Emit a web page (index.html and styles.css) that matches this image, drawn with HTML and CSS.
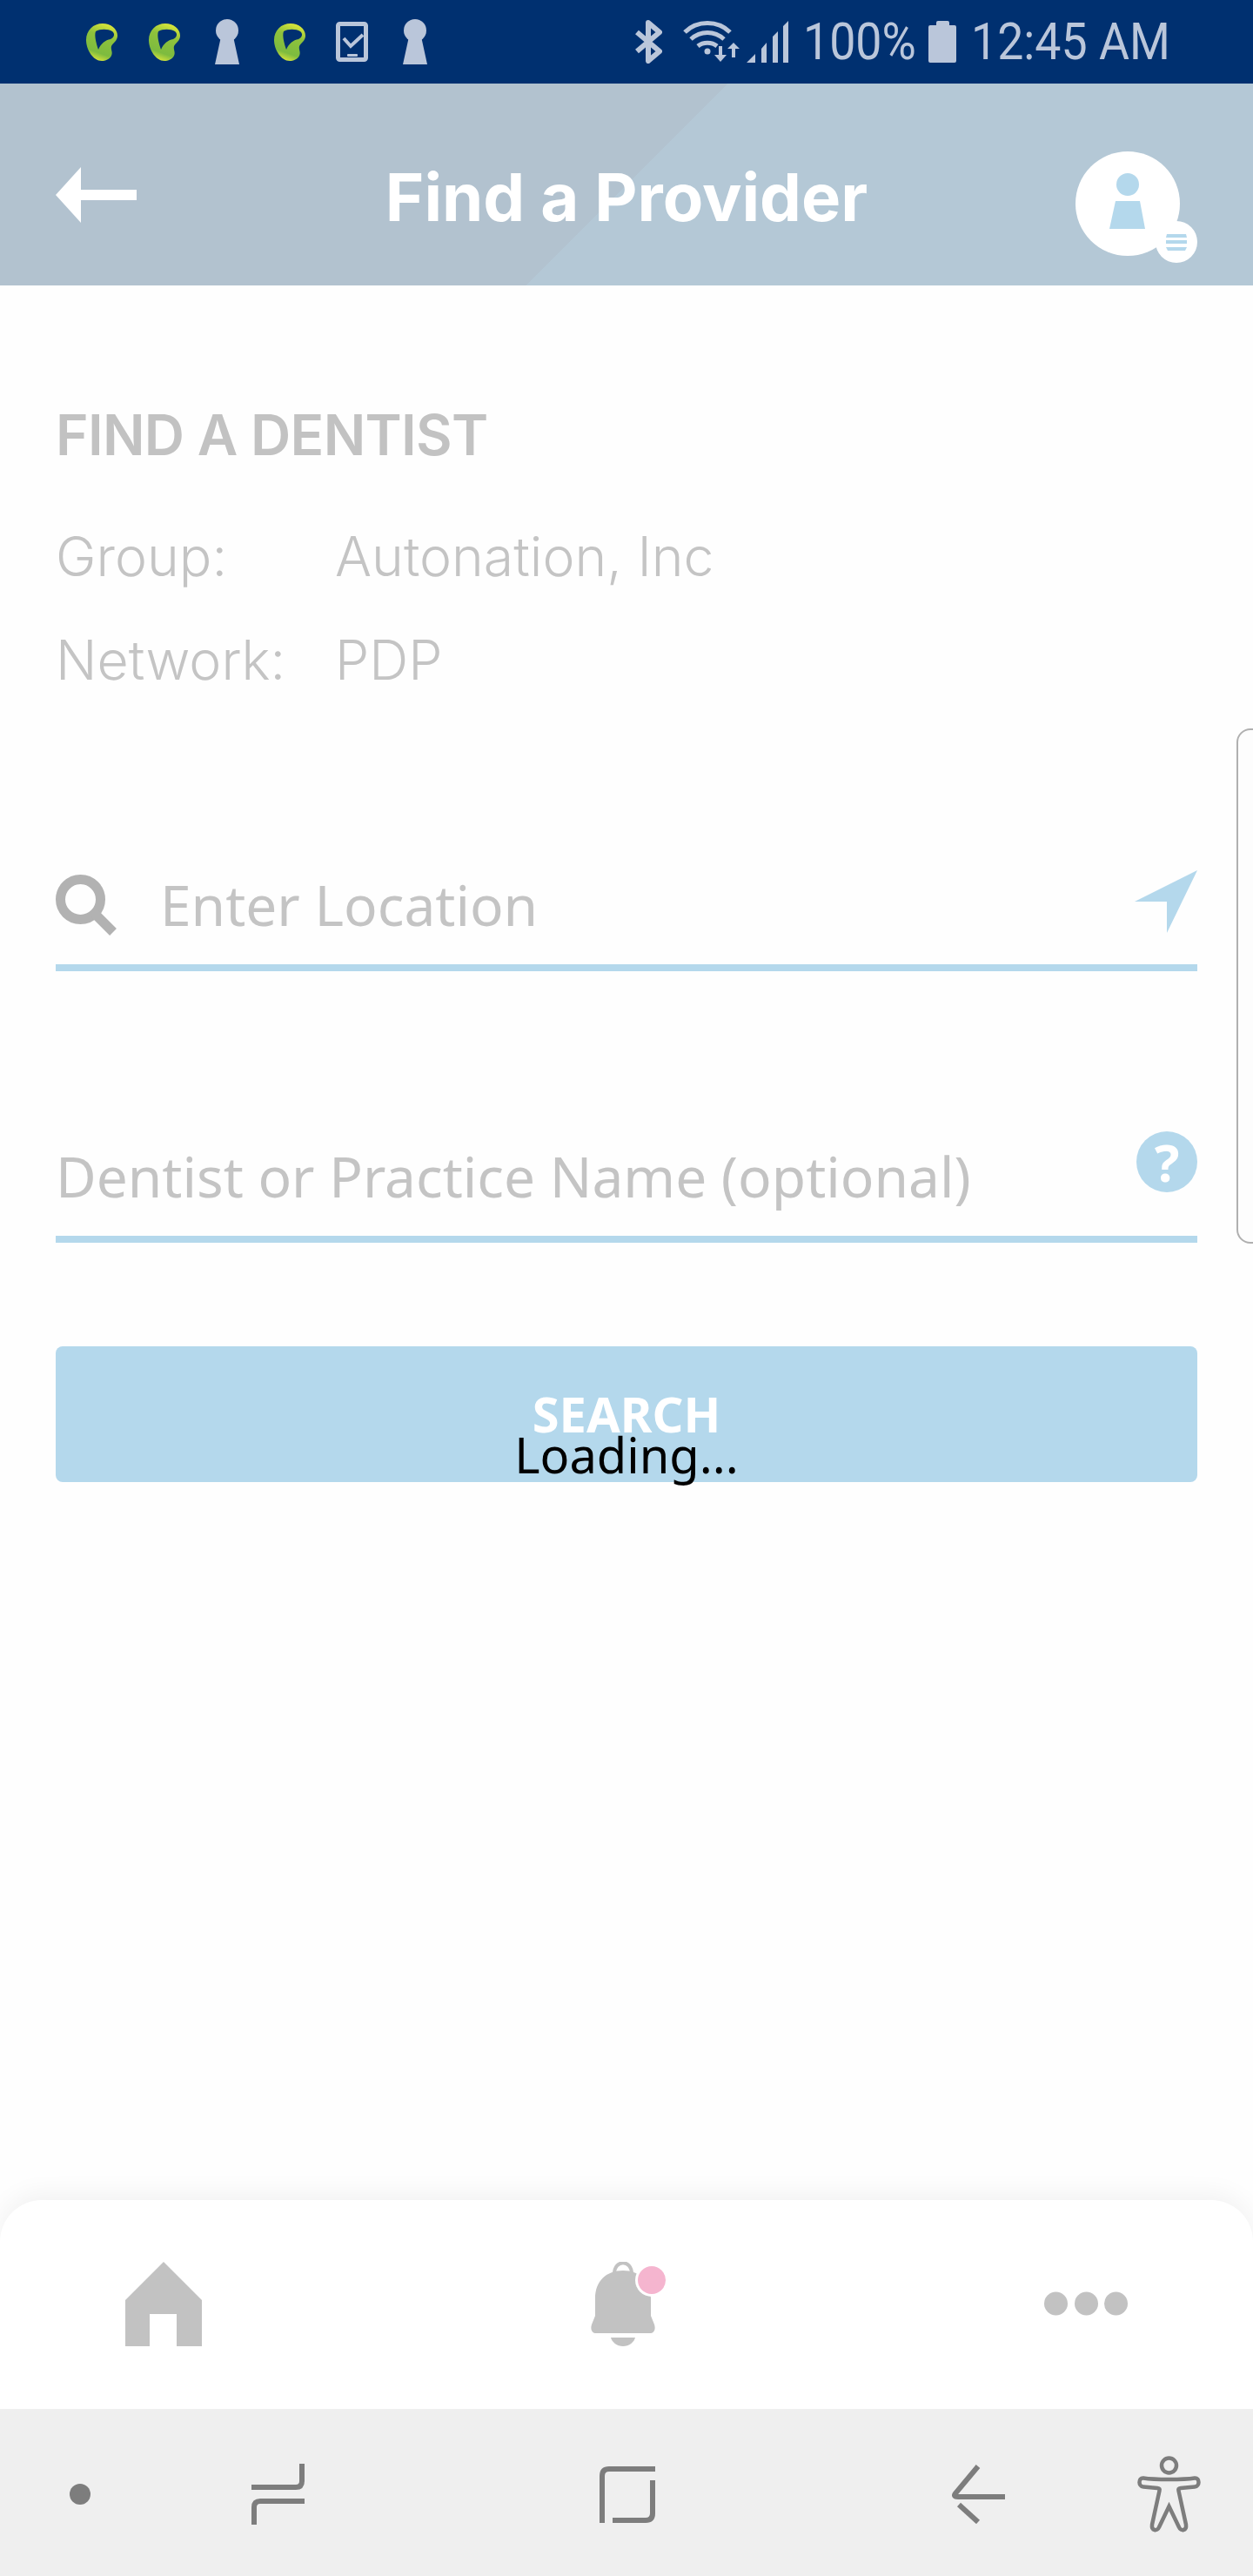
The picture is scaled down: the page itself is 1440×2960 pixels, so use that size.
FILE: index.html
```html
<!DOCTYPE html>
<html lang="en">
<head>
  <meta charset="UTF-8">
  <title>Find a Provider</title>
  <meta name="viewport" content="width=device-width, initial-scale=1">
  <link rel="stylesheet" href="styles.css">
</head>
<body>

  <svg class="defs" width="0" height="0">
    <defs>
      <linearGradient id="leafFill" x1="0.7" y1="0" x2="0.4" y2="1">
        <stop offset="0" stop-color="#dfe83a"/>
        <stop offset="0.35" stop-color="#8fc23c"/>
        <stop offset="0.8" stop-color="#7dbb3f"/>
        <stop offset="1" stop-color="#d3e23c"/>
      </linearGradient>
      <symbol id="leaf" viewBox="0 0 36 43">
        <path fill="url(#leafFill)" fill-rule="evenodd" d="M19,0 C28,0 36,6 36,14 C36,20 31,22 29,26 C28,30 31,33 29,37 C27,41 22,43 18,43 C8,43 0,30 0,19 C0,8 8,0 19,0 Z M11,9 C16,6 25,6 30,9 C33,11 33,16 28,18 C22,19 17,23 14,30 C12,24 9,14 11,9 Z"/>
      </symbol>
      <symbol id="keyhole" viewBox="0 0 28 52">
        <circle cx="14" cy="13" r="13" fill="#bac6da"/>
        <path fill="#bac6da" d="M7,20 L21,20 L28,52 L0,52 Z"/>
      </symbol>
    </defs>
  </svg>

  <div class="status-bar">
    <svg class="leaf"><use href="#leaf"/></svg>
    <svg class="leaf"><use href="#leaf"/></svg>
    <svg class="keyhole"><use href="#keyhole"/></svg>
    <svg class="leaf"><use href="#leaf"/></svg>
    <svg class="phone-check" viewBox="0 0 37 46">
      <rect x="2.500" y="2.500" width="32" height="41" rx="2" fill="none" stroke="#bac6da" stroke-width="5"/>
      <path d="M9,19 L17,28 L31,15" fill="none" stroke="#bac6da" stroke-width="4"/>
      <rect x="13" y="37" width="12" height="3" rx="1" fill="#bac6da"/>
    </svg>
    <svg class="keyhole"><use href="#keyhole"/></svg>

    <svg class="bluetooth" viewBox="0 0 32 50">
      <path d="M3,14 L29,36 L16,47 L16,3 L29,14 L3,36" fill="none" stroke="#bac6da" stroke-width="6" stroke-linejoin="round"/>
    </svg>
    <svg class="wifi" viewBox="0 0 65 48">
      <g fill="none" stroke="#bac6da" stroke-width="5">
        <path d="M2,13 C16,-1 40,-1 54,13"/>
        <path d="M9,21 C20,11 36,11 47,21"/>
        <path d="M17,29 C23,24 33,24 39,29"/>
      </g>
      <circle cx="28" cy="35" r="3.500" fill="#bac6da"/>
      <path fill="#bac6da" d="M41,29 H45 V39 H50 L43,47 L36,39 H41 Z M56,42 H60 V32 H65 L58,25 L51,32 H56 Z"/>
    </svg>
    <svg class="signal" viewBox="0 0 48 48">
      <path fill="#bac6da" d="M0,48 L10,38 V48 Z M17,32 L23,25 V48 H17 Z M30,18 L36,12 V48 H30 Z M42,6 L48,0 V48 H42 Z"/>
    </svg>
    <span class="status-text percent">100%</span>
    <svg class="battery" viewBox="0 0 32 48">
      <path fill="#bac6da" d="M9,2 Q9,0 11,0 H22 Q24,0 24,2 V5 H30 Q32,5 32,7 V46 Q32,48 30,48 H2 Q0,48 0,46 V7 Q0,5 2,5 H9 Z"/>
    </svg>
    <span class="status-text clock">12:45 AM</span>
  </div>

  <header class="top-bar">
    <svg class="back-arrow" viewBox="0 0 93 64">
      <path fill="#fff" d="M0,32 L29,0 V26 H93 V38 H29 V64 Z"/>
    </svg>
    <h1>Find a Provider</h1>
    <svg class="avatar" viewBox="0 0 140 128">
      <circle cx="60" cy="60" r="60" fill="#fff"/>
      <ellipse cx="60" cy="38" rx="13" ry="13" fill="#b4d8ec"/>
      <path fill="#b4d8ec" d="M46,57 H74 L80,89 H39 Z"/>
      <circle cx="116" cy="104" r="24" fill="#fff"/>
      <path fill="#b4d8ec" d="M105,95 H127 L128,99 H104 Z M104,102 H128 V106 H104 Z M104,110 H128 L126,114 H106 Z"/>
    </svg>
  </header>

  <main class="content">
    <h2>FIND A DENTIST</h2>
    <div class="plan-info">
      <span>Group:</span><span>Autonation, Inc</span>
      <span>Network:</span><span>PDP</span>
    </div>

    <div class="field field-location">
      <svg class="search-icon" viewBox="0 0 71 71">
        <circle cx="28.500" cy="28.500" r="23" fill="none" stroke="#b2b2b2" stroke-width="11"/>
        <path d="M45,45 L66,66" stroke="#b2b2b2" stroke-width="11"/>
      </svg>
      <span class="placeholder">Enter Location</span>
      <svg class="locate-icon" viewBox="0 0 72 72">
        <path fill="#b4d8ec" d="M72,0 L37,72 V36 H0 Z"/>
      </svg>
    </div>

    <div class="field field-name">
      <span class="placeholder">Dentist or Practice Name (optional)</span>
      <span class="help-icon">?</span>
    </div>

    <button class="search-btn">SEARCH</button>
    <div class="loading">Loading...</div>

    <div class="side-handle"></div>
  </main>

  <nav class="tab-bar">
    <svg class="tab-home" viewBox="0 0 88 97">
      <path fill="#c2c2c2" d="M44,0 L88,44 V97 H59 V60 H28 V97 H0 V44 Z"/>
    </svg>
    <svg class="tab-bell" viewBox="0 0 86 97">
      <path fill="none" stroke="#c2c2c2" stroke-width="4" d="M27,14 C27,-3 47,-3 47,14"/>
      <path fill="#c2c2c2" d="M37,10 C18,10 5,22 5,42 V62 L1,72 C-1,78 2,82 6,82 H68 C72,82 75,78 73,72 L69,62 V42 C69,22 56,10 37,10 Z"/>
      <path fill="#c2c2c2" d="M23,87 H51 C50,92 44,97 37,97 C30,97 24,92 23,87 Z"/>
      <circle cx="70" cy="21" r="19" fill="#fff"/>
      <circle cx="70" cy="21" r="16" fill="#f5b5cf"/>
    </svg>
    <svg class="tab-more" viewBox="0 0 96 97">
      <circle cx="13.500" cy="48" r="13.500" fill="#c2c2c2"/>
      <circle cx="48.500" cy="48" r="13.500" fill="#c2c2c2"/>
      <circle cx="82.500" cy="48" r="13.500" fill="#c2c2c2"/>
    </svg>
  </nav>

  <div class="system-nav">
    <svg class="sys-dot" viewBox="0 0 24 24"><circle cx="12" cy="12" r="12" fill="#7d7d7d"/></svg>
    <svg class="sys-recents" viewBox="0 0 61 70">
      <g fill="none" stroke="#7d7d7d" stroke-width="6">
        <path d="M58,0 V20 Q58,27 51,27 H0"/>
        <path d="M61,43 H10 Q3,43 3,50 V70"/>
      </g>
    </svg>
    <svg class="sys-home" viewBox="0 0 64 65">
      <g fill="none" stroke="#7d7d7d" stroke-width="6">
        <path d="M3,65 V11 Q3,3 11,3 H64"/>
        <path d="M15,62 H53 Q61,62 61,54 V16"/>
      </g>
    </svg>
    <svg class="sys-back" viewBox="0 0 61 68">
      <g fill="none" stroke="#7d7d7d" stroke-width="6">
        <path d="M30,2 L4,33 Q1,37 7,37 H61"/>
        <path d="M8,46 L30,66"/>
      </g>
    </svg>
    <svg class="sys-access" viewBox="0 0 73 88">
      <g fill="none" stroke="#7d7d7d" stroke-width="4.500">
        <circle cx="36.500" cy="11" r="8.500"/>
        <path d="M7,25.500 C20,27.500 53,27.500 66,25.500 C72,25 72,35 66,35.500 L50,37 C47,37.500 47,38 47.500,40 L56,79 C57,86 50,87 48,82 L36.500,58 L25,82 C23,87 16,86 17,79 L25.500,40 C26,38 26,37.500 23,37 L7,35.500 C1,35 1,25 7,25.500 Z"/>
      </g>
    </svg>
  </div>

</body>
</html>
```

FILE: styles.css
```css
* {
  box-sizing: border-box;
}

html, body {
  margin: 0;
  padding: 0;
}

body {
  position: relative;
  width: 1440px;
  height: 2960px;
  display: flex;
  flex-direction: column;
  background-color: #fefefe;
  font-family: 'Noto Sans', sans-serif;
  overflow: hidden;
}

svg {
  display: block;
  flex: none;
}

.defs {
  position: absolute;
}

/* status bar */
.status-bar {
  height: 96px;
  flex: none;
  display: flex;
  align-items: center;
  gap: 36px;
  padding-left: 99px;
  background-color: #003070;
}

.leaf {
  width: 36px;
  height: 43px;
  margin-top: 1px;
}

.keyhole {
  width: 28px;
  height: 52px;
  margin: 0 4px;
}

.phone-check {
  width: 37px;
  height: 46px;
  margin-left: -1px;
}

.bluetooth {
  width: 32px;
  height: 50px;
  margin-left: 198px;
}

.wifi {
  width: 65px;
  height: 48px;
  margin-left: -12px;
}

.signal {
  width: 48px;
  height: 48px;
  margin-left: -28px;
}

.percent {
  width: 122px;
  margin-left: -19px;
}

.battery {
  width: 32px;
  height: 48px;
  margin-left: -14px;
}

.clock {
  width: 222px;
  margin-left: -19px;
}

.status-text {
  font-family: 'Roboto', sans-serif;
  font-size: 60px;
  line-height: 70px;
  color: #bac6da;
  white-space: nowrap;
  transform: scaleX(0.895);
  transform-origin: left center;
}

/* header */
.top-bar {
  height: 232px;
  flex: none;
  display: grid;
  grid-template-columns: 1fr auto 1fr;
  align-items: center;
  padding: 24px 64px 0;
  background: linear-gradient(135deg, #b2c2cf 50%, #b4c8d6 50%);
}

.back-arrow {
  width: 93px;
  height: 64px;
}

h1 {
  margin: 3px 0 0;
  font-family: 'Inter', sans-serif;
  font-size: 76px;
  font-weight: 700;
  line-height: 92px;
  color: white;
}

.avatar {
  width: 140px;
  height: 128px;
  justify-self: end;
  margin-top: 28px;
}

/* form */
.content {
  flex: 1;
  padding: 134px 64px 0;
}

h2 {
  margin: 0;
  font-family: 'Inter', sans-serif;
  font-size: 64px;
  font-weight: 600;
  letter-spacing: -0.7px;
  line-height: 76px;
  color: #c2c2c2;
}

.plan-info {
  display: grid;
  grid-template-columns: 321px 1fr;
  margin-top: 42px;
  font-family: 'Inter', sans-serif;
  font-size: 62.5px;
  font-weight: 300;
  line-height: 119px;
  color: #c4c4c4;
}

.field {
  height: 130px;
  display: flex;
  align-items: flex-start;
  border-bottom: 8px solid #b4d8ec;
}

.field-location {
  margin-top: 168px;
}

.field-name {
  margin-top: 182px;
}

.placeholder {
  margin-top: 15px;
  font-size: 64px;
  line-height: 78px;
  color: #c4c4c4;
}

.search-icon {
  width: 71px;
  height: 71px;
  margin: 19px 49px 0 0;
}

.locate-icon {
  width: 72px;
  height: 72px;
  margin: 14px 0 0 auto;
}

.help-icon {
  width: 70px;
  height: 70px;
  margin: 2px 0 0 auto;
  border-radius: 50%;
  background-color: #b4d8ec;
  font-size: 60px;
  font-weight: 700;
  line-height: 70px;
  text-align: center;
  color: white;
}

.search-btn {
  display: flex;
  justify-content: center;
  align-items: flex-start;
  width: 100%;
  height: 156px;
  margin-top: 119px;
  padding: 39px 0 0;
  border: none;
  border-radius: 8px;
  background-color: #b4d8ec;
  font-family: 'Noto Sans', sans-serif;
  font-size: 56px;
  font-weight: 700;
  line-height: 76px;
  color: white;
}

.loading {
  position: relative;
  margin-top: -70px;
  font-size: 56px;
  line-height: 76px;
  text-align: center;
  color: black;
}

.side-handle {
  position: absolute;
  top: 837px;
  right: -2px;
  width: 21px;
  height: 592px;
  border: 2px solid #b0b0b0;
  border-radius: 16px 0 0 16px;
  background-color: #fdfdfd;
}

/* bottom tabs */
.tab-bar {
  position: relative;
  height: 240px;
  flex: none;
  display: flex;
  justify-content: space-between;
  align-items: flex-start;
  padding: 71px 144px 0;
  border-radius: 48px 48px 0 0;
  background-color: white;
  box-shadow: 0 -8px 28px rgba(0, 0, 0, 0.05);
}

.tab-home {
  width: 88px;
  height: 97px;
}

.tab-bell {
  width: 86px;
  height: 97px;
  margin-left: 12px;
}

.tab-more {
  width: 96px;
  height: 97px;
}

/* android nav */
.system-nav {
  position: relative;
  height: 192px;
  flex: none;
  display: flex;
  align-items: center;
  padding: 4px 0 0 80px;
  background-color: #efefef;
}

.sys-dot {
  width: 24px;
  height: 24px;
}

.sys-recents {
  width: 61px;
  height: 70px;
  margin-left: 185px;
}

.sys-home {
  width: 64px;
  height: 65px;
  margin-left: 339px;
}

.sys-back {
  width: 61px;
  height: 68px;
  margin-left: 341px;
}

.sys-access {
  width: 73px;
  height: 88px;
  margin-left: 152px;
}
```
